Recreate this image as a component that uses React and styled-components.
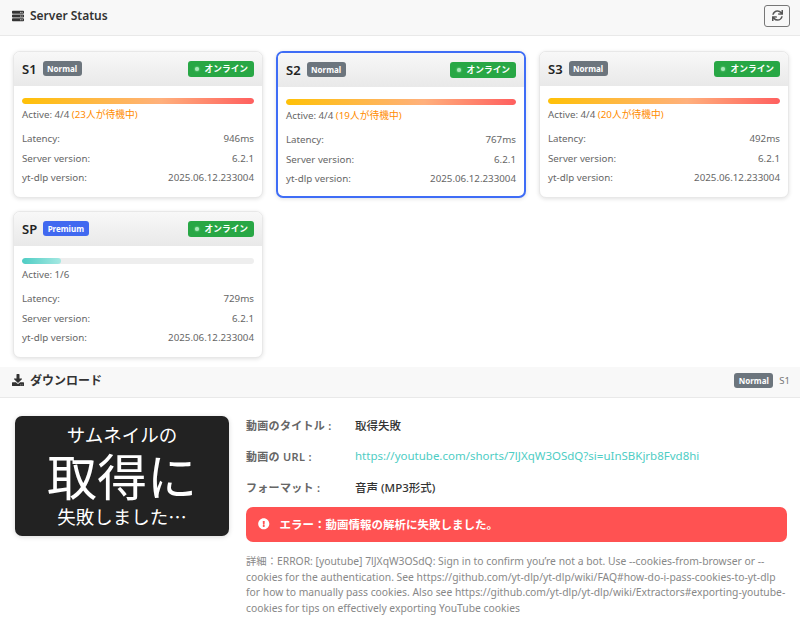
import React from 'react';
import styled, { createGlobalStyle } from 'styled-components';
import { FaServer, FaSync, FaDownload, FaExclamationCircle } from 'react-icons/fa';

const GlobalStyle = createGlobalStyle`
  html, body {
    margin: 0;
    padding: 0;
    background: #fff;
  }
  body {
    font-family: "Noto Sans", "Noto Sans CJK JP", sans-serif;
    color: #333;
  }
  * {
    box-sizing: border-box;
  }
`;

const SectionHeader = styled.div`
  display: flex;
  align-items: center;
  justify-content: space-between;
  height: ${props => props.$height}px;
  padding: 0 10px 4px 12px;
  background: #f8f8f8;
  border-bottom: 1px solid #e9e9e9;
`;

const SectionTitle = styled.h2`
  display: flex;
  align-items: center;
  gap: 6px;
  margin: 0;
  color: #333;
  font-size: 12px;
  font-weight: 600;
  svg {
    font-size: 12px;
  }
`;

const RefreshButton = styled.button`
  display: flex;
  align-items: center;
  justify-content: center;
  width: 26px;
  height: 22px;
  padding: 0;
  color: #555;
  background: transparent;
  border: 1px solid #777;
  border-radius: 3px;
  font-size: 11px;
`;

const ServerGrid = styled.div`
  display: grid;
  grid-template-columns: repeat(3, 250px);
  gap: 13px;
  padding: 15px 13px 9px;
`;

const Card = styled.div`
  display: flex;
  flex-direction: column;
  height: 147px;
  overflow: hidden;
  background: #fff;
  border: ${props => (props.$selected ? '2px solid #3f6df6' : '1px solid #e8e8e8')};
  border-radius: 7px;
  box-shadow: 0 1px 4px rgba(0, 0, 0, 0.12);
`;

const CardHeader = styled.div`
  display: flex;
  align-items: center;
  justify-content: space-between;
  height: 34px;
  flex-shrink: 0;
  padding: 0 8px 1px;
  background: linear-gradient(180deg, #f8f8f8, #e9e9e9);
`;

const ServerName = styled.div`
  display: flex;
  align-items: center;
  gap: 6px;
  color: #222;
  font-size: 13px;
  font-weight: 600;
`;

const Tier = styled.span`
  display: inline-block;
  padding: 0 4.5px;
  height: 15px;
  line-height: 15px;
  color: #fff;
  background: ${props => (props.$premium ? '#4169f0' : '#6c757d')};
  border-radius: 3px;
  font-size: 8px;
  font-weight: 700;
`;

const Online = styled.span`
  display: flex;
  align-items: center;
  gap: 6px;
  height: 16px;
  padding: 0 6px 0 7px;
  color: #fff;
  background: #28a745;
  border-radius: 3px;
  font-size: 8.7px;
  font-weight: 700;
  white-space: nowrap;
`;

const Dot = styled.i`
  width: 4px;
  height: 4px;
  background: #a8e8b8;
  border-radius: 50%;
  box-shadow: 0 0 2px #a8e8b8;
`;

const CardBody = styled.div`
  padding: 12px 8px 0;
  color: #666;
  font-size: 9.75px;
`;

const Track = styled.div`
  height: 6px;
  overflow: hidden;
  background: #eee;
  border-radius: 3px;
`;

const Fill = styled.div`
  height: 100%;
  background: ${props =>
    props.$premium
      ? 'linear-gradient(90deg, #4ecdc4, #a5e8e2)'
      : 'linear-gradient(90deg, #ffc107, #ffb07c 60%, #ff5f5f)'};
  border-radius: 3px;
`;

const Active = styled.div`
  margin: 3px 0 6px;
  height: 16px;
  line-height: 16px;
`;

const Waiting = styled.span`
  color: #ff8c00;
`;

const InfoRow = styled.div`
  display: flex;
  justify-content: space-between;
  height: 19.5px;
  line-height: 19.5px;
`;

const ServerTag = styled.div`
  display: flex;
  align-items: center;
  gap: 6px;
  color: #777;
  font-size: 9.5px;
`;

const DownloadBody = styled.div`
  display: flex;
  align-items: flex-start;
  gap: 17px;
  padding: 11px 13px 0 15px;
`;

const Thumbnail = styled.div`
  display: flex;
  flex-direction: column;
  align-items: center;
  justify-content: center;
  width: 214px;
  height: 120px;
  margin-top: 7px;
  flex-shrink: 0;
  color: #fff;
  background: #222;
  border-radius: 7px;
  box-shadow: 0 1px 5px rgba(0, 0, 0, 0.15);
  font-family: "Noto Sans CJK JP", sans-serif;
`;

const ThumbLine = styled.div`
  font-size: ${props => props.$size}px;
  line-height: ${props => props.$line}px;
  white-space: nowrap;
`;

const Details = styled.div`
  flex: 1;
  min-width: 0;
`;

const MetaRow = styled.div`
  display: flex;
  align-items: center;
  height: 31px;
`;

const MetaLabel = styled.div`
  width: 109px;
  flex-shrink: 0;
  color: #666;
  font-size: 11px;
  font-weight: 600;
  letter-spacing: 0.3px;
`;

const MetaValue = styled.div`
  color: #333;
  font-size: 11.5px;
  font-weight: 500;
`;

const VideoLink = styled.a`
  color: #4ecdc4;
  font-size: 11.5px;
  text-decoration: none;
`;

const ErrorBox = styled.div`
  display: flex;
  align-items: center;
  gap: 10px;
  height: 35px;
  margin-top: 5px;
  padding: 0 12px 1px;
  color: #fff;
  background: #ff5252;
  border-radius: 7px;
  font-size: 11.5px;
  font-weight: 600;
`;

const ErrorDetail = styled.p`
  margin: 12px 0 0;
  color: #888;
  font-size: 10.33px;
  line-height: 15.7px;
`;

const servers = [
  { name: 'S1', tier: 'Normal', active: '4/4', waiting: '23人が待機中', latency: '946ms' },
  { name: 'S2', tier: 'Normal', active: '4/4', waiting: '19人が待機中', latency: '767ms', selected: true },
  { name: 'S3', tier: 'Normal', active: '4/4', waiting: '20人が待機中', latency: '492ms' },
  { name: 'SP', tier: 'Premium', active: '1/6', latency: '729ms', percent: 16.6 },
];

const ServerCard = ({ server }) => {
  const premium = server.tier === 'Premium';
  return (
    <Card $selected={server.selected}>
      <CardHeader>
        <ServerName>
          {server.name}
          <Tier $premium={premium}>{server.tier}</Tier>
        </ServerName>
        <Online><Dot />オンライン</Online>
      </CardHeader>
      <CardBody>
        <Track>
          <Fill $premium={premium} style={{ width: `${server.percent || 100}%` }} />
        </Track>
        <Active>
          Active: {server.active}
          {server.waiting && <Waiting> ({server.waiting})</Waiting>}
        </Active>
        <InfoRow><span>Latency:</span><span>{server.latency}</span></InfoRow>
        <InfoRow><span>Server version:</span><span>6.2.1</span></InfoRow>
        <InfoRow><span>yt-dlp version:</span><span>2025.06.12.233004</span></InfoRow>
      </CardBody>
    </Card>
  );
};

const App = () => (
  <>
    <GlobalStyle />
    <SectionHeader $height={36}>
      <SectionTitle><FaServer />Server Status</SectionTitle>
      <RefreshButton><FaSync /></RefreshButton>
    </SectionHeader>
    <ServerGrid>
      {servers.map(server => <ServerCard key={server.name} server={server} />)}
    </ServerGrid>
    <SectionHeader $height={31}>
      <SectionTitle><FaDownload />ダウンロード</SectionTitle>
      <ServerTag><Tier>Normal</Tier>S1</ServerTag>
    </SectionHeader>
    <DownloadBody>
      <Thumbnail>
        <ThumbLine $size={18.5} $line={26}>サムネイルの</ThumbLine>
        <ThumbLine $size={50} $line={54}>取得に</ThumbLine>
        <ThumbLine $size={18.5} $line={30}>失敗しました…</ThumbLine>
      </Thumbnail>
      <Details>
        <MetaRow>
          <MetaLabel>動画のタイトル :</MetaLabel>
          <MetaValue>取得失敗</MetaValue>
        </MetaRow>
        <MetaRow>
          <MetaLabel>動画の URL :</MetaLabel>
          <VideoLink href="#">https://youtube.com/shorts/7lJXqW3OSdQ?si=uInSBKjrb8Fvd8hi</VideoLink>
        </MetaRow>
        <MetaRow>
          <MetaLabel>フォーマット :</MetaLabel>
          <MetaValue>音声 (MP3形式)</MetaValue>
        </MetaRow>
        <ErrorBox><FaExclamationCircle />エラー：動画情報の解析に失敗しました。</ErrorBox>
        <ErrorDetail>
          詳細：ERROR: [youtube] 7lJXqW3OSdQ: Sign in to confirm you’re not a bot. Use --cookies-from-browser or --cookies for the authentication. See https://github.com/yt-dlp/yt-dlp/wiki/FAQ#how-do-i-pass-cookies-to-yt-dlp for how to manually pass cookies. Also see https://github.com/yt-dlp/yt-dlp/wiki/Extractors#exporting-youtube-cookies for tips on effectively exporting YouTube cookies
        </ErrorDetail>
      </Details>
    </DownloadBody>
  </>
);

export default App;
